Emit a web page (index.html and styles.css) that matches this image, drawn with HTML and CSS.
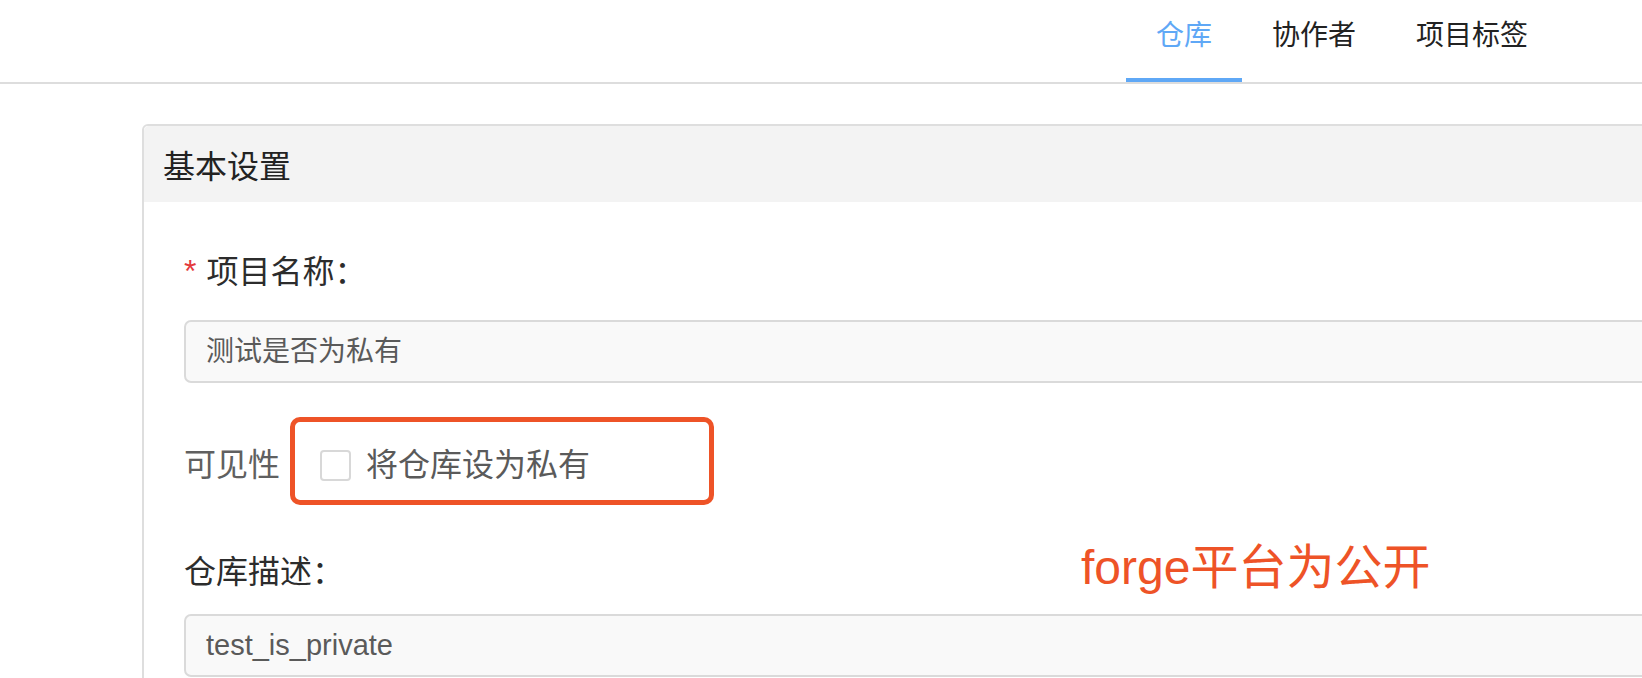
FILE: index.html
```html
<!DOCTYPE html>
<html lang="zh-CN">
<head>
  <meta charset="UTF-8" />
  <meta name="viewport" content="width=device-width, initial-scale=1" />
  <title>仓库设置</title>
  <link rel="stylesheet" href="styles.css">
</head>
<body>

  <div class="topbar">
    <nav class="tabs">
      <a class="tab active" href="#">仓库</a>
      <a class="tab" href="#">协作者</a>
      <a class="tab" href="#">项目标签</a>
    </nav>
  </div>

  <div class="card">
    <div class="card-head">基本设置</div>

    <div class="card-body">
      <div class="field-label"><span class="required">*</span>项目名称：</div>
      <div class="input">测试是否为私有</div>

      <div class="visibility">
        <span class="vis-label">可见性</span>
        <label class="check">
          <span class="check-box"></span>
          <span class="check-text">将仓库设为私有</span>
        </label>
        <div class="mark-box"></div>
      </div>

      <div class="field-label desc-label">仓库描述：</div>
      <div class="input input-desc">test_is_private</div>
    </div>

    <div class="mark-note">forge平台为公开</div>
  </div>

</body>
</html>
```

FILE: styles.css
```css
:root {
  --font-main: "Liberation Sans", "Noto Sans CJK SC", sans-serif;
  --accent-color: #5fa8f6;
  --mark-color: #ee5327;
  --border-color: #dedede;
  --text-dark: #222;
  --text-gray: #5a5a5a;
}

body {
  margin: 0;
  font-family: var(--font-main);
  background: #fff;
  color: var(--text-dark);
  overflow: hidden;
}

/* barre d'onglets */
.topbar {
  height: 82px;
  border-bottom: 2px solid #dddddd;
}

.tabs {
  display: flex;
  justify-content: flex-end;
  padding-right: 84px;
}

.tab {
  display: block;
  padding: 22px 30px 28px;
  font-size: 28px;
  line-height: 28px;
  color: var(--text-dark);
  text-decoration: none;
  border-bottom: 4px solid transparent;
}

.tab.active {
  color: var(--accent-color);
  border-bottom-color: var(--accent-color);
}

/* carte principale */
.card {
  position: relative;
  width: 1700px;
  margin: 40px 0 0 142px;
  border: 2px solid var(--border-color);
  border-radius: 6px 6px 0 0;
}

.card-head {
  padding: 25px 19px 19px;
  font-size: 32px;
  line-height: 32px;
  background: #f3f3f3;
  border-radius: 5px 5px 0 0;
}

.card-body {
  padding: 54px 0 40px 40px;
}

.field-label {
  font-size: 32px;
  line-height: 32px;
  color: #2c2c2c;
}

.required {
  margin-right: 10px;
  color: #e4393c;
  font-size: 32px;
  line-height: 0;
  vertical-align: 1px;
}

.input {
  box-sizing: border-box;
  height: 63px;
  margin-top: 32px;
  padding: 0 20px;
  background: #f9f9f9;
  border: 2px solid #dadada;
  border-radius: 7px;
  font-size: 28px;
  line-height: 59px;
  color: var(--text-gray);
}

.visibility {
  position: relative;
  display: flex;
  align-items: center;
  height: 32px;
  margin-top: 66px;
}

.vis-label {
  font-size: 32px;
  line-height: 32px;
  color: #606060;
}

.check {
  display: flex;
  align-items: center;
  margin-left: 40px;
}

.check-box {
  box-sizing: border-box;
  width: 31px;
  height: 31px;
  background: #fff;
  border: 2px solid #d8d8d8;
  border-radius: 4px;
}

.check-text {
  margin-left: 15px;
  font-size: 32px;
  line-height: 32px;
  color: var(--text-gray);
}

/* annotations rouges par-dessus la capture */
.mark-box {
  position: absolute;
  left: 106px;
  top: -32px;
  width: 424px;
  height: 88px;
  box-sizing: border-box;
  border: 5px solid var(--mark-color);
  border-radius: 10px;
}

.mark-note {
  position: absolute;
  left: 937px;
  top: 418px;
  font-size: 48px;
  line-height: 48px;
  color: var(--mark-color);
  white-space: nowrap;
}

.desc-label {
  margin-top: 75px;
}

.input-desc {
  margin-top: 26px;
  font-size: 29px;
}
```
